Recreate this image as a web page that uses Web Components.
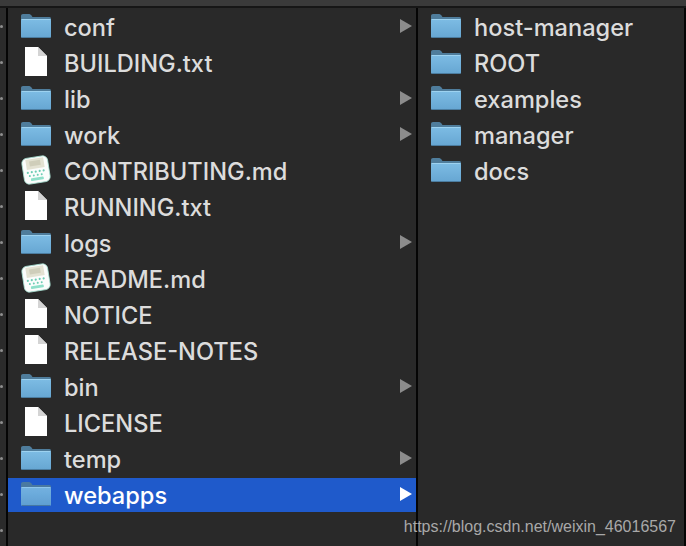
<!DOCTYPE html>
<html>
<head>
<meta charset="utf-8">
<style>
  html, body { margin: 0; height: 100%; background: #292929; overflow: hidden; }
</style>
</head>
<body>
<finder-window>
  <finder-sidebar slot="sidebar"></finder-sidebar>
  <finder-column slot="columns" style="width:410px">
    <finder-row icon="folder" arrow>conf</finder-row>
    <finder-row icon="file">BUILDING.txt</finder-row>
    <finder-row icon="folder" arrow>lib</finder-row>
    <finder-row icon="folder" arrow>work</finder-row>
    <finder-row icon="md">CONTRIBUTING.md</finder-row>
    <finder-row icon="file">RUNNING.txt</finder-row>
    <finder-row icon="folder" arrow>logs</finder-row>
    <finder-row icon="md">README.md</finder-row>
    <finder-row icon="file">NOTICE</finder-row>
    <finder-row icon="file">RELEASE-NOTES</finder-row>
    <finder-row icon="folder" arrow>bin</finder-row>
    <finder-row icon="file">LICENSE</finder-row>
    <finder-row icon="folder" arrow>temp</finder-row>
    <finder-row icon="folder" arrow selected>webapps</finder-row>
  </finder-column>
  <finder-column slot="columns" style="flex:1">
    <finder-row icon="folder">host-manager</finder-row>
    <finder-row icon="folder">ROOT</finder-row>
    <finder-row icon="folder">examples</finder-row>
    <finder-row icon="folder">manager</finder-row>
    <finder-row icon="folder">docs</finder-row>
  </finder-column>
  <span slot="mark">https://blog.csdn.net/weixin_46016567</span>
</finder-window>

<script>
const ICONS = {
  folder: `<svg width="32" height="24" viewBox="0 0 32 24" style="margin:0 2px 2px 0">
    <defs><linearGradient id="f" x1="0" y1="0" x2="0" y2="1">
      <stop offset="0" stop-color="#7dbce4"/><stop offset="1" stop-color="#66a6d2"/>
    </linearGradient></defs>
    <path d="M1 7V2C1 .8 1.800 0 3 0H8.500C10 0 10.500 .5 11.500 1.500L12.500 3H29.500C30.500 3 31 3.800 31 5V7Z" fill="#4f7d9c"/>
    <path d="M1 6.500C1 5.600 1.600 5 2.500 5H29.500C30.400 5 31 5.600 31 6.500V22.500C31 23.400 30.400 24 29.500 24H2.500C1.600 24 1 23.400 1 22.500Z" fill="url(#f)"/>
    <rect x="1.500" y="5" width="29" height="1" fill="#9dd2f0"/>
    <rect x="2" y="23" width="28" height="1" fill="#4b7c9f"/>
  </svg>`,
  file: `<svg width="22" height="29" viewBox="0 0 22 29" style="margin:0 2px 3px 0">
    <path d="M0 0H13L22 9V29H0Z" fill="#fff"/>
    <path d="M13 0V9H22Z" fill="#d4d4d4"/>
  </svg>`,
  md: `<svg width="32" height="30" viewBox="0 0 32 30" style="margin:0 2px 3px 0">
    <g transform="rotate(-9 16 15)">
      <rect x="3" y="2" width="26" height="26" rx="5" fill="#fbfdfc" stroke="#a9e2d3" stroke-width=".8"/>
      <rect x="7" y="3.500" width="18" height="10" fill="#e3e2d2"/>
      <rect x="10.500" y="5.500" width="11" height="5" fill="#cfceba"/>
      <g fill="#6ccdb4">
        <circle cx="7.500" cy="16.500" r="1.100"/><circle cx="11.500" cy="16.500" r="1.100"/><circle cx="15.500" cy="16.500" r="1.100"/><circle cx="19.500" cy="16.500" r="1.100"/><circle cx="23.500" cy="16.500" r="1.100"/>
        <circle cx="9" cy="20" r="1"/><circle cx="13" cy="20" r="1"/><circle cx="17" cy="20" r="1"/><circle cx="21" cy="20" r="1"/>
        <rect x="9.500" y="22.500" width="13" height="2.800" rx="1" fill="#8fe0ca"/>
      </g>
    </g>
  </svg>`
};

class FinderRow extends HTMLElement {
  constructor() {
    super();
    this.shadowDOM = this.attachShadow({ mode: 'open' });
  }

  connectedCallback() {
    const icon = this.getAttribute('icon');
    this.shadowDOM.innerHTML = `
      <style>
        :host {
          display: flex;
          align-items: center;
          height: 34px;
          padding-left: 12px;
          padding-right: 4px;
          color: #dcdcdc;
          font: 500 23.600px Inter, "Liberation Sans", Arial, sans-serif;
          box-sizing: border-box;
        }
        :host([selected]) { background: #1f5acb; color: #fff; }
        :host([selected]) .icon { opacity: .9; }
        .icon { width: 34px; height: 34px; display: flex; align-items: center; justify-content: center; flex: none; }
        .text { margin-left: 10px; flex: 1; white-space: nowrap; }
        .arrow { width: 0; height: 0; flex: none; margin-bottom: 2px; border-left: 12px solid #8c8c8c; border-top: 7px solid transparent; border-bottom: 7px solid transparent; }
        :host([selected]) .arrow { border-left-color: #fff; }
      </style>
      <span class="icon">${ICONS[icon]}</span>
      <span class="text"><slot></slot></span>
      ${this.hasAttribute('arrow') ? '<span class="arrow"></span>' : ''}
    `;
  }
}
customElements.define('finder-row', FinderRow);

class FinderColumn extends HTMLElement {
  constructor() {
    super();
    this.attachShadow({ mode: 'open' }).innerHTML = `
      <style>
        :host { display: flex; flex-direction: column; gap: 2px; box-sizing: border-box; border-right: 2px solid #050505; padding-top: 2px; }
        :host(:last-child) { border-right: 0; }
      </style>
      <slot></slot>
    `;
  }
}
customElements.define('finder-column', FinderColumn);

class FinderSidebar extends HTMLElement {
  constructor() {
    super();
    this.attachShadow({ mode: 'open' }).innerHTML = `
      <style>
        :host { display: flex; flex-direction: column; gap: 2px; width: 6px; flex: none; background: #2b2b2b; border-right: 2px solid #050505; padding-top: 1px; }
        i { display: flex; align-items: center; height: 34px; flex: none; }
        i::before { content: ""; width: 3px; height: 3px; border-radius: 50%; background: #8f8f8f; }
        i:first-child { background: #3c3c3c; }
      </style>
      ${'<i></i>'.repeat(15)}
    `;
  }
}
customElements.define('finder-sidebar', FinderSidebar);

class FinderWindow extends HTMLElement {
  constructor() {
    super();
    this.attachShadow({ mode: 'open' }).innerHTML = `
      <style>
        :host { display: flex; flex-direction: column; position: relative; width: 686px; height: 546px; background: #292929; overflow: hidden; }
        .top { height: 8px; flex: none; background: #3a3a3a; border-bottom: 2px solid #161616; box-sizing: border-box; }
        .body { display: flex; flex: 1; min-height: 0; }
        .mark { position: absolute; right: 10px; top: 518px; font: 16px "Liberation Sans", Arial, sans-serif; color: #a8a8a8; }
      </style>
      <div class="top"></div>
      <div class="body"><slot name="sidebar"></slot><slot name="columns"></slot></div>
      <div class="mark"><slot name="mark"></slot></div>
    `;
  }
}
customElements.define('finder-window', FinderWindow);
</script>
</body>
</html>
